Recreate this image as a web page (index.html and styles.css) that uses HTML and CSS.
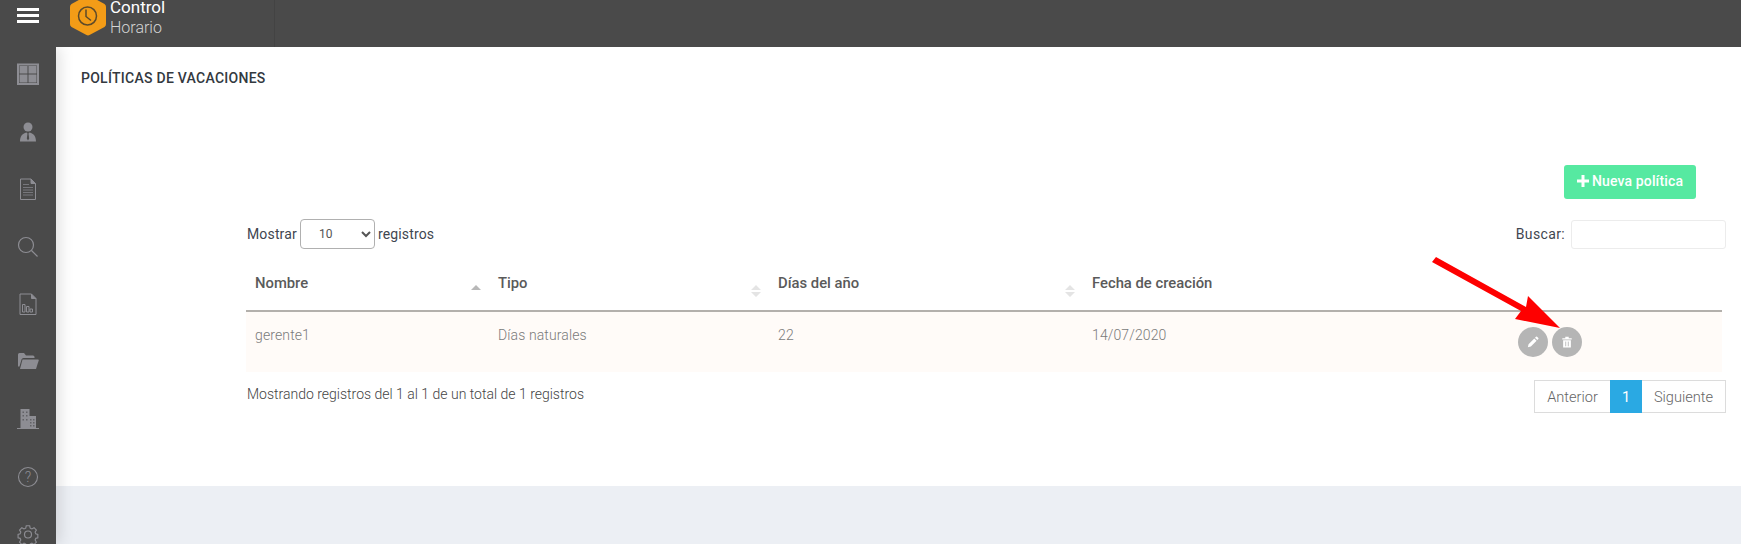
FILE: index.html
```html
<!DOCTYPE html>
<html lang="es">
<head>
<meta charset="utf-8">
<title>Políticas de vacaciones</title>
<link rel="stylesheet" href="styles.css">
</head>
<body>
<div class="app">
  <header class="topbar">
    <div class="burger"><span></span><span></span><span></span></div>
    <div class="brand">
      <svg class="logo" viewBox="0 0 36 36" width="36" height="36">
        <path d="M18 -5 L34.500 4 Q36 5 36 7 V24 Q36 26 34.500 27 L19.500 35 Q18 35.800 16.500 35 L1.500 27 Q0 26 0 24 V7 Q0 5 1.500 4 Z" fill="#f39c17"/>
        <circle cx="17.500" cy="16" r="9" fill="none" stroke="#5d4a2a" stroke-width="1.500"/>
        <path d="M16 9.500 V16.500 L21 20.500" fill="none" stroke="#5d4a2a" stroke-width="1.500"/>
      </svg>
      <div class="brand-text"><span class="brand-top">Control</span><span class="brand-sub">Horario</span></div>
    </div>
  </header>
  <div class="body-row">
    <nav class="sidebar">
      <svg class="nav-icon" viewBox="0 0 22 22"><path d="M1 1.500h20v19.500h-20z" fill="none" stroke="#8d8d93" stroke-width="2"/><path d="M2.500 3h8v7.500h-8zM11.500 3h8v7.500h-8zM2.500 11.500h8v8h-8zM11.500 11.500h8v8h-8z" fill="#8d8d93"/></svg>
      <svg class="nav-icon" viewBox="0 0 22 22"><circle cx="11" cy="6" r="4.500" fill="#8d8d93"/><path d="M3 20.500c0-5 2-8 6.500-9l1 1-.7 5 1.200 2 1.200-2-.7-5 1-1c4.500 1 6.500 4 6.500 9z" fill="#8d8d93"/></svg>
      <svg class="nav-icon" viewBox="0 0 22 22"><path d="M3.500 1h10.500l4.500 4.500v16h-15z" fill="none" stroke="#8d8d93"/><path d="M14 1v4.500h4.500" fill="#8d8d93" stroke="#8d8d93"/><path d="M6 6.500h6M6 9.500h10M6 12h10M6 14.500h10M6 17h10" stroke="#77777c"/></svg>
      <svg class="nav-icon" viewBox="0 0 22 22"><circle cx="9" cy="9" r="7.500" fill="none" stroke="#8d8d93" stroke-width="1.200"/><path d="M14.500 14.500l6 6" stroke="#8d8d93" stroke-width="1.200"/></svg>
      <svg class="nav-icon" viewBox="0 0 22 22"><path d="M3 1h11.500l4.500 4.500v16h-16z" fill="none" stroke="#8d8d93"/><path d="M14.500 1v4.500h4.500" fill="#8d8d93" stroke="#8d8d93"/><path d="M5.500 11.500h2.500v7.500h-2.500zM9.500 13.500h2.500v5.500h-2.500zM13 16h2.500v3h-2.500z" fill="none" stroke="#8d8d93"/></svg>
      <svg class="nav-icon" viewBox="0 0 22 22"><path d="M1 3.500q0-1.500 1.500-1.500h4.500l2 2.500h7q1.500 0 1.500 1.500v1h-11q-1.500 0-2 1.500l-2 7h-1.500z" fill="#8d8d93"/><path d="M5.500 8.500h15.500q1 0 .7 1l-2.700 8.500h-16z" fill="#8d8d93"/></svg>
      <svg class="nav-icon" viewBox="0 0 22 22"><path d="M3.500 1h9v7h6.500v12h-15.500z" fill="#8d8d93"/><path d="M5.500 3.500h1.500v1.500h-1.500zM9 3.500h1.500v1.500h-1.500zM5.500 7h1.500v1.500h-1.500zM9 7h1.500v1.500h-1.500zM5.500 11h1.500v1.500h-1.500zM9 11h1.500v1.500h-1.500zM13 11h1.500v1.500h-1.500zM16 11h1.500v1.500h-1.500zM13 14h1.500v1.500h-1.500zM16 14h1.500v1.500h-1.500zM13 17h1.500v1.500h-1.500zM16 17h1.500v1.500h-1.500z" fill="#626266"/><path d="M0 20.500h22" stroke="#8d8d93"/></svg>
      <svg class="nav-icon" viewBox="0 0 22 22"><circle cx="11" cy="11" r="9.500" fill="none" stroke="#8d8d93" stroke-width="1.100"/><text x="11" y="16" text-anchor="middle" class="help-mark">?</text></svg>
      <svg class="nav-icon" viewBox="0 0 22 22"><path d="M9 1.500h4l.6 2.800 2 .9 2.500-1.500 2.700 2.800-1.500 2.400.8 2 2.400.6v4l-2.400.6-.8 2 1.500 2.400-2.700 2.800-2.500-1.500-2 .9-.6 2.300h-4l-.6-2.300-2-.9-2.500 1.500-2.700-2.800 1.500-2.400-.8-2-2.400-.6v-4l2.400-.6.8-2-1.500-2.400 2.700-2.800 2.500 1.500 2-.9z" transform="translate(1.500 1.500) scale(.86)" fill="none" stroke="#8d8d93" stroke-width="1.300"/><circle cx="11" cy="11.500" r="3.500" fill="none" stroke="#8d8d93" stroke-width="1.200"/></svg>
    </nav>
    <div class="main">
      <main class="panel">
        <h1 class="title">POLÍTICAS DE VACACIONES</h1>
        <div class="actions"><button class="new-btn"><svg class="plus" viewBox="0 0 12 12" width="12" height="12"><path d="M4.500 0h3v4.500h4.500v3h-4.500v4.500h-3v-4.500h-4.500v-3h4.500z" fill="#fff"/></svg>Nueva política</button></div>
        <div class="listing">
          <div class="controls">
            <label class="length">Mostrar
              <select class="length-select"><option>10</option></select>
              registros</label>
            <label class="search">Buscar: <input class="search-input" type="text"></label>
          </div>
          <table class="grid">
            <colgroup><col class="c1"><col class="c2"><col class="c3"><col class="c4"><col class="c5"></colgroup>
            <thead>
              <tr>
                <th><div class="th-in">Nombre
                  <svg class="sort" viewBox="0 0 10 14"><path d="M0 6 L5 1 L10 6Z" fill="#b8b8b8"/></svg></div></th>
                <th><div class="th-in">Tipo
                  <svg class="sort" viewBox="0 0 10 14"><path d="M0 6 L5 1 L10 6Z M0 8 L10 8 L5 13Z" fill="#e4e4e4"/></svg></div></th>
                <th><div class="th-in">Días del año
                  <svg class="sort" viewBox="0 0 10 14"><path d="M0 6 L5 1 L10 6Z M0 8 L10 8 L5 13Z" fill="#e4e4e4"/></svg></div></th>
                <th><div class="th-in">Fecha de creación</div></th>
                <th></th>
              </tr>
            </thead>
            <tbody>
              <tr>
                <td>gerente1</td>
                <td>Días naturales</td>
                <td>22</td>
                <td>14/07/2020</td>
                <td>
                  <div class="row-actions">
                    <button class="round"><svg viewBox="0 0 14 14" width="12" height="12"><path d="M1 13l.8-3.500 6.700-6.700 2.700 2.700-6.700 6.700zM9.300 2l1.200-1.200q.6-.5 1.200 0l1.500 1.500q.5.6 0 1.200l-1.200 1.200z" fill="#fff"/></svg></button>
                    <button class="round"><svg viewBox="0 0 14 14" width="12" height="12"><path d="M1.500 2.500h3.500v-1.500h4v1.500h3.500v1.500h-11zM2.500 5h9v8.500h-9z" fill="#fff"/><path d="M5.500 6.500v5.500M8.500 6.500v5.500" stroke="#b5b5b5"/></svg></button>
                  </div>
                </td>
              </tr>
            </tbody>
          </table>
          <div class="foot">
            <div class="info">Mostrando registros del 1 al 1 de un total de 1 registros</div>
            <div class="pager"><a class="pg pg-prev">Anterior</a><a class="pg pg-cur">1</a><a class="pg pg-next">Siguiente</a></div>
          </div>
        </div>
      </main>
      <div class="page-foot"></div>
    </div>
  </div>
</div>
<svg class="arrow" viewBox="0 0 1741 544" width="1741" height="544"><path d="M1432 262 L1436 257 L1526 307 L1528 296 L1560 328 L1515 319 L1521 311 Z" fill="#fe0000"/></svg>
</body>
</html>
```
FILE: styles.css
```css
* { box-sizing: border-box; }
html, body { margin: 0; height: 544px; overflow: hidden; }
body { font-family: Roboto, "Noto Sans", sans-serif; font-size: 14px; color: #3f4650; background: #eceff4; position: relative; }
.app { display: flex; flex-direction: column; height: 544px; }
.topbar { height: 47px; flex: none; background: #4a4a4a; display: flex; align-items: flex-start; position: relative; z-index: 3; }
.burger { width: 56px; padding: 8px 17px 0; display: flex; flex-direction: column; gap: 3px; }
.burger span { display: block; height: 3px; background: #fff; }
.brand { width: 219px; height: 47px; border-right: 1px solid #434343; display: flex; align-items: flex-start; padding-left: 14px; gap: 4px; }
.logo { display: block; flex: none; }
.brand-text { display: flex; flex-direction: column; color: #fff; line-height: 20px; margin-top: -3px; }
.brand-top { font-size: 17px; font-weight: 400; }
.brand-sub { font-size: 16px; font-weight: 300; color: #d4d4d4; margin-top: 1px; }
.body-row { flex: 1; display: flex; min-height: 0; }
.sidebar { width: 56px; flex: none; background: #4a4a4a; display: flex; flex-direction: column; align-items: center; padding-top: 16px; gap: 35.5px; overflow: hidden; box-shadow: 4px 0 14px rgba(0,0,0,.12); position: relative; z-index: 2; }
.nav-icon { width: 22px; height: 22px; flex: none; display: block; }
.help-mark { font-family: Roboto, sans-serif; font-size: 14px; font-weight: 300; fill: #8d8d93; }
.main { flex: 1; display: flex; flex-direction: column; min-width: 0; }
.panel { height: 439px; flex: none; background: #fff; padding: 0 15px 0 25px; }
.page-foot { flex: 1; background: #eceff4; }
.title { margin: 0; padding-top: 23px; font-size: 14px; line-height: 17px; font-weight: 500; color: #33393f; letter-spacing: .27px; }
.actions { display: flex; justify-content: flex-end; margin-top: 78px; padding-right: 30px; }
.new-btn { width: 132px; height: 34px; border: 0; border-radius: 3px; background: #56e9a1; color: #fff; font: 500 14px Roboto, sans-serif; letter-spacing: .15px; padding: 0 0 2px; display: flex; align-items: center; justify-content: center; gap: 3px; }
.plus { display: block; flex: none; }
.listing { margin-left: 165px; }
.controls { display: flex; justify-content: space-between; align-items: center; margin-top: 20px; height: 30px; }
.length { display: flex; align-items: center; gap: 3px; padding: 0 0 1px 1px; letter-spacing: .15px; }
.length-select { width: 75px; height: 30px; padding: 0 0 0 14px; border: 1px solid #b0b0b0; border-radius: 4px; background: #fff; font: 12px Roboto, sans-serif; color: #555; }
.search { display: flex; align-items: center; gap: 6px; letter-spacing: .35px; }
.search-input { width: 155px; height: 29px; border: 1px solid #ececec; border-radius: 3px; background: #fff; }
.grid { border-collapse: collapse; table-layout: fixed; width: 1476px; margin-top: 16px; }
.c1 { width: 243px; }
.c2 { width: 280px; }
.c3 { width: 314px; }
.c4 { width: 426px; }
.grid th { height: 46px; padding: 10px 9px 0; vertical-align: top; text-align: left; font-size: 14.8px; line-height: 16px; font-weight: 500; color: #5a5a5a; border-bottom: 2px solid #b3b0ac; }
.th-in { display: flex; justify-content: space-between; align-items: flex-start; margin-right: -1px; }
.sort { width: 10px; height: 14px; margin-top: 9px; flex: none; }
.grid td { height: 61px; padding: 0 9px 14px; background: #fffbf8; color: #7a7a7a; font-size: 14px; letter-spacing: .12px; font-weight: 300; }
.row-actions { display: flex; gap: 4px; padding-top: 14px; }
.round { width: 30px; height: 30px; border: 0; padding: 0; border-radius: 50%; background: #b5b5b5; display: flex; align-items: center; justify-content: center; }
.foot { display: flex; justify-content: space-between; align-items: flex-start; margin-top: 8px; }
.info { font-size: 14px; font-weight: 300; margin: 6px 0 0 1px; color: #444; }
.pager { display: flex; height: 33px; border: 1px solid #dcdcdc; font-size: 14.6px; font-weight: 300; color: #666; }
.pg { display: flex; align-items: center; justify-content: center; }
.pg-prev { width: 75px; }
.pg-cur { width: 32px; margin: -1px 0; background: #2aa9e3; color: #fff; font-weight: 400; }
.pg-next { width: 83px; }
.arrow { position: absolute; left: 0; top: 0; z-index: 5; pointer-events: none; }
```
